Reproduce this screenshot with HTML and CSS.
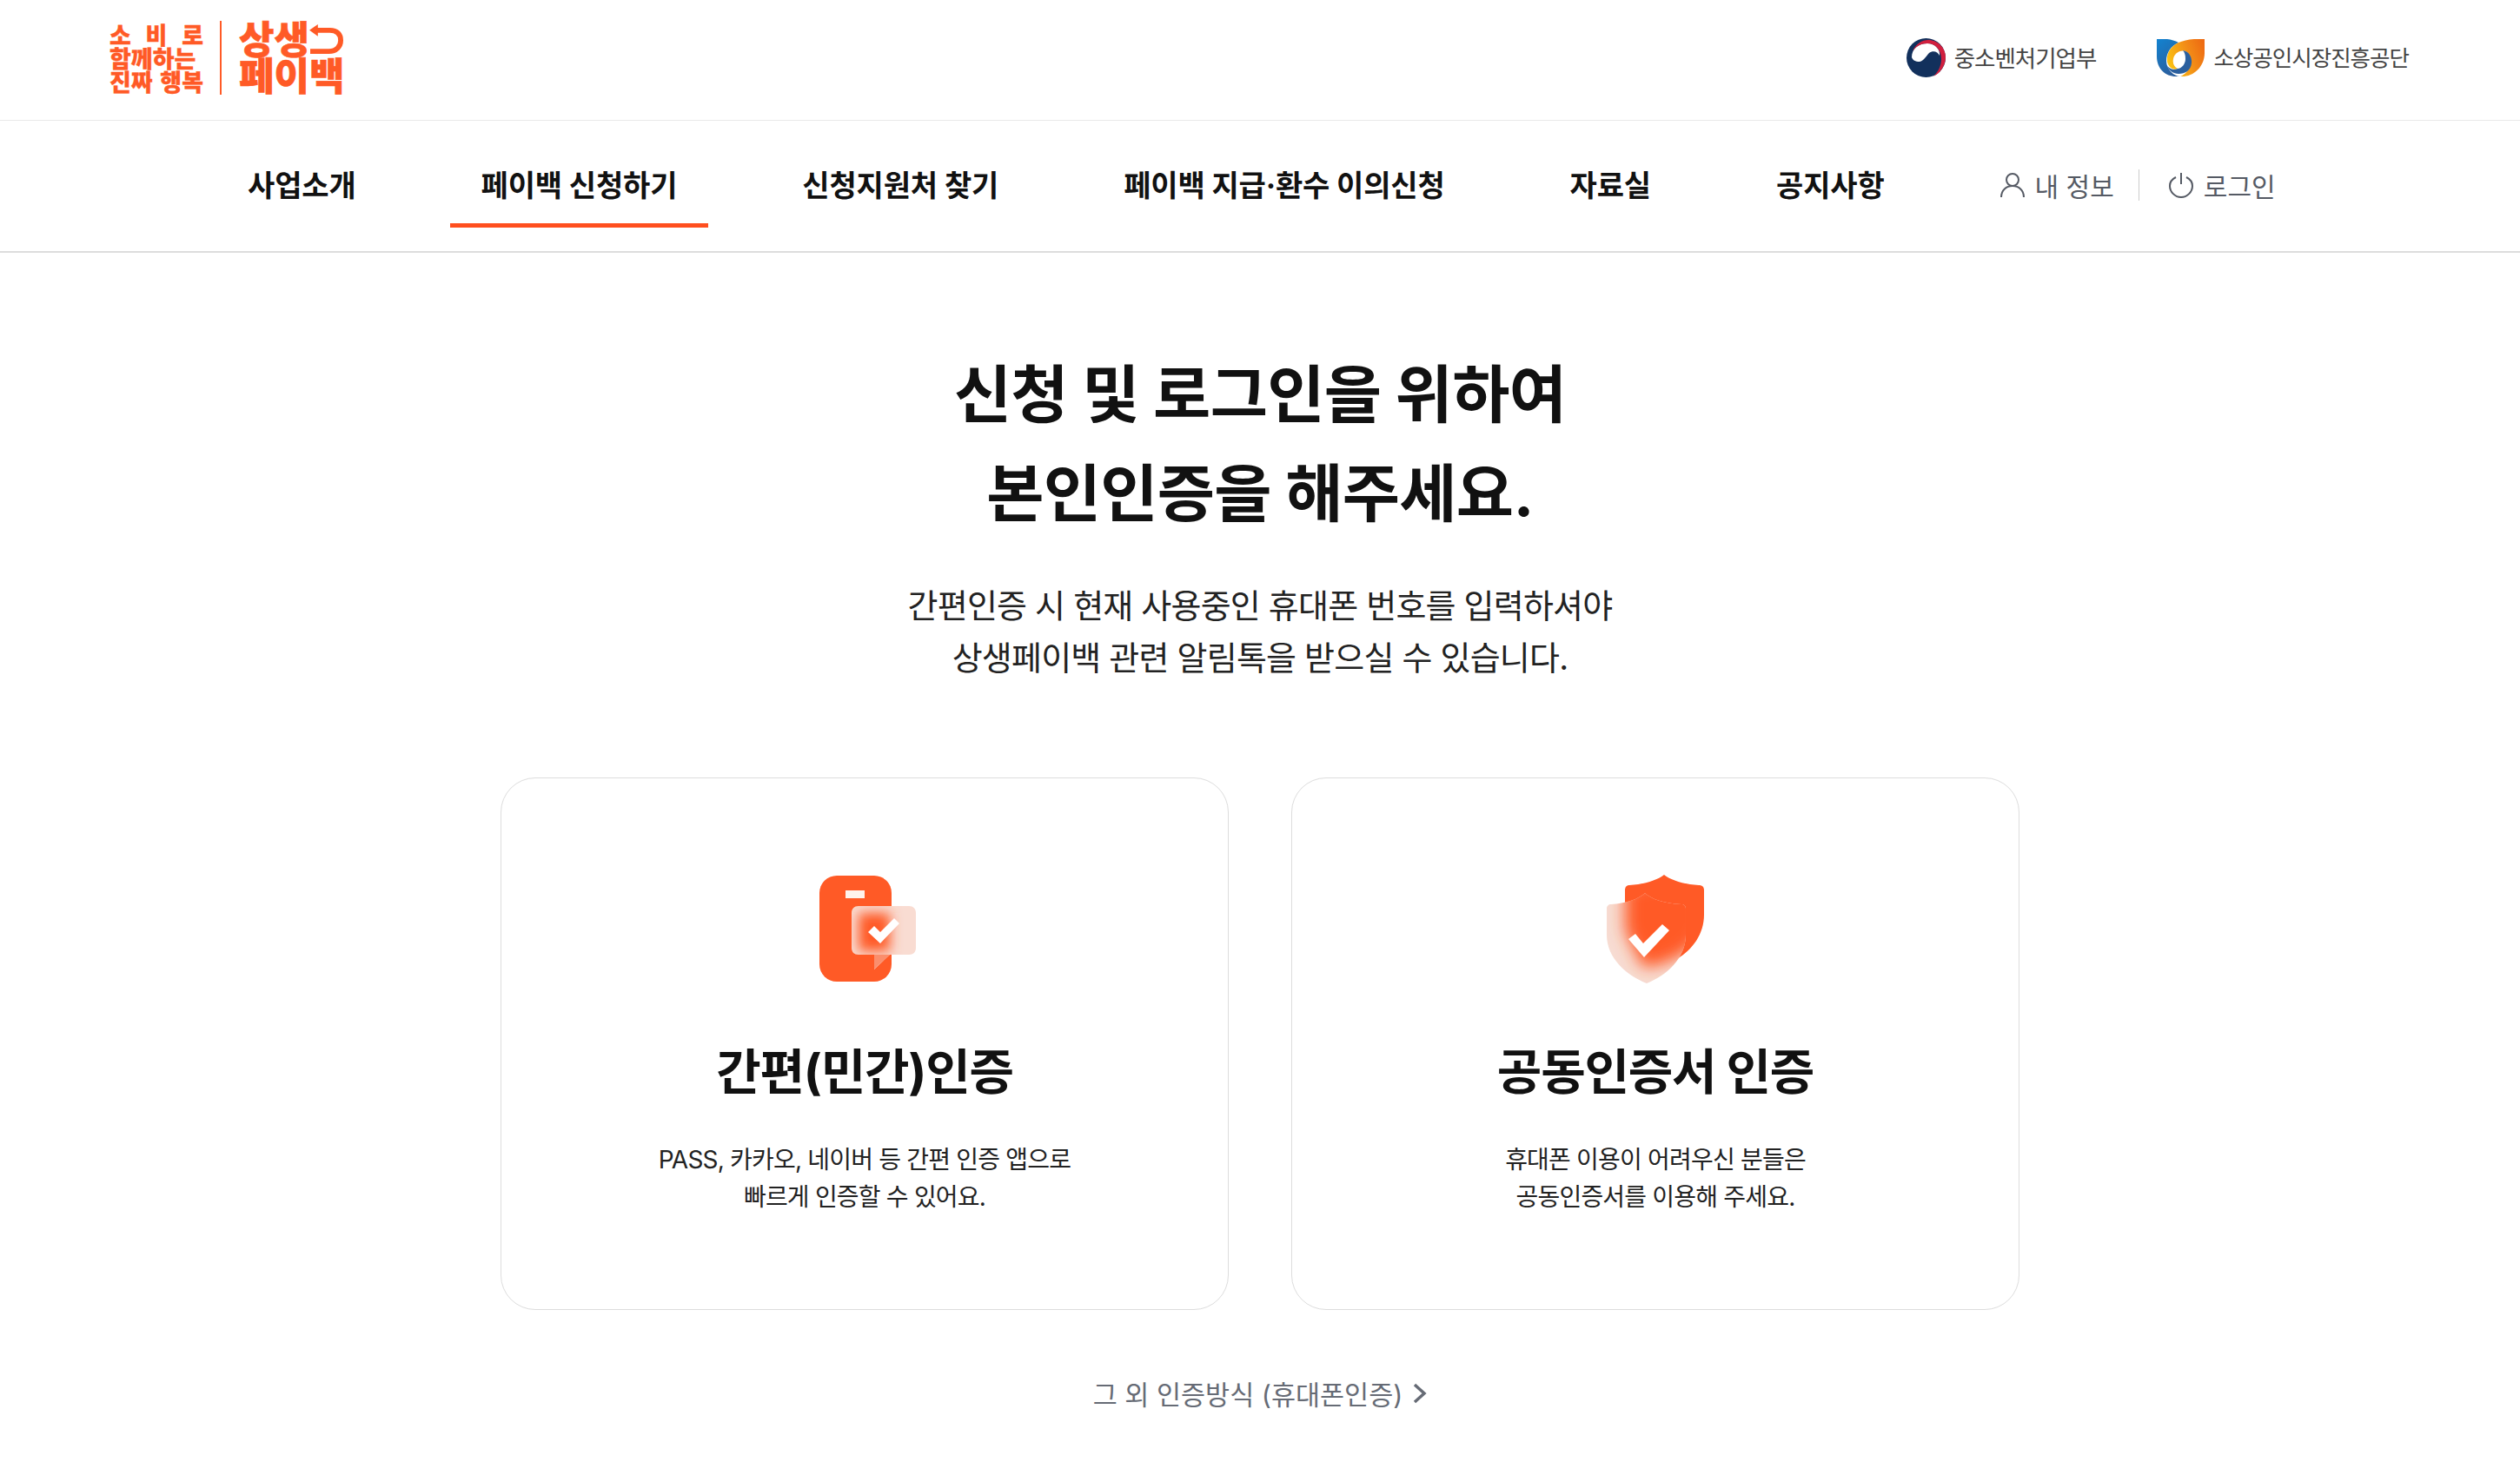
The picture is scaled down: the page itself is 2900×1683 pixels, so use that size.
FILE: index.html
```html
<!DOCTYPE html>
<html lang="ko">

<head>
  <meta charset="UTF-8">
  <meta name="viewport" content="width=device-width, initial-scale=1.0">
  <title>상생페이백</title>

  <link rel="stylesheet" href="styles.css">
</head>

<body>
  <header class="top-bar">
    <a class="logo">
      <div class="logo-slogan">
        <p>소 비 로</p>
        <p>함께하는</p>
        <p>진짜 행복</p>
      </div>
      <div class="logo-name">
        <p class="logo-name-top">상생
          <svg class="logo-arrow" viewBox="0 0 42 38">
            <path d="M6 7H24C33 7 37 12 37 19C37 26 32 32 23 32H1" fill="none" stroke="#ff5a26" stroke-width="6" />
            <path d="M0 7L10 0V14Z" fill="#ff5a26" />
          </svg>
        </p>
        <p>페이백</p>
      </div>
    </a>
    <div class="org-wrap">
      <div class="org org-first">
        <svg class="org-mark" viewBox="0 0 45 45">
          <circle cx="22.500" cy="22.500" r="22.500" fill="#12305c" />
          <path d="M6 22C6 12 14 6 24 6C33 6 39 13 38 20C36 15 30 14 26 17C23 20 20 26 15 27C10 27 7 25 6 22Z" fill="#fff" />
          <path d="M7 15C11 6 18 2 25 2C36 2 45 11 45 22C45 31 39 40 31 44C37 38 40 31 40 24C40 13 33 6 24 6C17 6 11 9 7 15Z" fill="#d11f3e" />
        </svg>
        <span>중소벤처기업부</span>
      </div>
      <div class="org org-second">
        <svg class="org-mark org-mark-wide" viewBox="8 10 55 44">
          <defs>
            <linearGradient id="kosmeBlue" x1="0" y1="0" x2="0.500" y2="1">
              <stop offset="0" stop-color="#1283d1" />
              <stop offset="1" stop-color="#2b5f9e" />
            </linearGradient>
            <linearGradient id="kosmeOrange" x1="0" y1="0.600" x2="1" y2="0.200">
              <stop offset="0" stop-color="#fbc312" />
              <stop offset="0.600" stop-color="#f28a17" />
              <stop offset="1" stop-color="#ee6b12" />
            </linearGradient>
          </defs>
          <path d="M8 10C16 9 26 10 33 14C24 18 19 26 19 35C19 45 28 53 35 53H30C18 53 8 44 8 30Z" fill="url(#kosmeBlue)" />
          <path d="M63 10C52 9 40 11 33 14C23 19 19 27 20 36C22 44 28 46 32 44C28 42 26 38 27 33C28 27 34 22 41 24C46 27 49 33 47 40C44 48 38 52 35 53C50 54 63 42 63 26Z" fill="url(#kosmeOrange)" />
          <path d="M38 23C45 24 49 31 48 38C47 46 41 50 33 50C27 50 22 46 20 41C24 45 28 46 32 44C37 44 41 38 41 33C41 28 40 25 38 23Z" fill="#2b5f9e" />
        </svg>
        <span>소상공인시장진흥공단</span>
      </div>
    </div>
  </header>

  <nav class="gnb">
    <a class="gnb-item">사업소개</a>
    <a class="gnb-item active">페이백 신청하기</a>
    <a class="gnb-item">신청지원처 찾기</a>
    <a class="gnb-item">페이백 지급·환수 이의신청</a>
    <a class="gnb-item">자료실</a>
    <a class="gnb-item">공지사항</a>
    <div class="user-menu">
      <a class="user-link">
        <svg class="user-icon" viewBox="0 0 28 30">
          <circle cx="14" cy="9" r="7" fill="none" stroke="#555a64" stroke-width="2" />
          <path d="M1 29C1 21 7 16 14 16C21 16 27 21 27 29" fill="none" stroke="#555a64" stroke-width="2" />
        </svg>
        내 정보
      </a>
      <i class="user-sep"></i>
      <a class="user-link">
        <svg class="user-icon" viewBox="0 0 28 30">
          <path d="M8 6C4 8 1 12 1 16C1 23 7 29 14 29C21 29 27 23 27 16C27 12 24 8 20 6" fill="none" stroke="#555a64" stroke-width="2" />
          <path d="M14 1V14" fill="none" stroke="#555a64" stroke-width="2" />
        </svg>
        로그인
      </a>
    </div>
  </nav>

  <main class="content">
    <h1 class="title">신청 및 로그인을 위하여<br>본인인증을 해주세요.</h1>
    <p class="sub">간편인증 시 현재 사용중인 휴대폰 번호를 입력하셔야<br>상생페이백 관련 알림톡을 받으실 수 있습니다.</p>

    <div class="card-wrap">
      <a class="card">
        <svg class="card-icon" viewBox="0 0 150 150">
          <defs>
            <clipPath id="bubbleClip">
              <path d="M68 52H126C131 52 134 55 134 60V100C134 105 131 108 126 108H104L86 125V108H68C63 108 60 105 60 100V60C60 55 63 52 68 52Z" />
            </clipPath>
            <filter id="blurA" x="-60%" y="-60%" width="220%" height="220%">
              <feGaussianBlur stdDeviation="7" />
            </filter>
          </defs>
          <rect x="23" y="17" width="83" height="122" rx="20" fill="#ff5a26" />
          <rect x="53" y="34" width="22" height="9" fill="#fff3ec" />
          <path d="M68 52H126C131 52 134 55 134 60V100C134 105 131 108 126 108H104L86 125V108H68C63 108 60 105 60 100V60C60 55 63 52 68 52Z" fill="#f9dcd2" />
          <g clip-path="url(#bubbleClip)">
            <rect x="68" y="60" width="36" height="44" fill="#ff5a26" filter="url(#blurA)" />
            <path d="M86 108H104L86 125Z" fill="#fb8e6c" />
          </g>
          <polygon points="79,82 86,75 93,82 109,66 115,72 93,95" fill="#fff" />
        </svg>
        <h2 class="card-title">간편(민간)인증</h2>
        <p class="card-desc">PASS, 카카오, 네이버 등 간편 인증 앱으로<br>빠르게 인증할 수 있어요.</p>
      </a>
      <a class="card">
        <svg class="card-icon" viewBox="0 0 150 150">
          <defs>
            <clipPath id="shieldClip">
              <path d="M63 37C70 44 85 49 105 50C108 50 110 52 110 55V85C110 112 88 132 65 141C42 132 19 112 19 85V55C19 52 21 50 24 50C41 49 56 44 63 37Z" />
            </clipPath>
            <filter id="blurB" x="-30%" y="-30%" width="160%" height="160%">
              <feGaussianBlur stdDeviation="9" />
            </filter>
          </defs>
          <path d="M85 16C92 22 108 27 125 28C129 28 131 30 131 34V62C131 84 118 102 100 113H60L40 80V34C40 30 42 28 45 28C62 27 78 22 85 16Z" fill="#ff5a26" />
          <path d="M63 37C70 44 85 49 105 50C108 50 110 52 110 55V85C110 112 88 132 65 141C42 132 19 112 19 85V55C19 52 21 50 24 50C41 49 56 44 63 37Z" fill="#f7dcd2" />
          <g clip-path="url(#shieldClip)">
            <path d="M85 16C92 22 108 27 125 28C129 28 131 30 131 34V70C131 90 112 112 70 122H60L40 80V34C40 30 42 28 45 28C62 27 78 22 85 16Z" fill="#ff5a26" filter="url(#blurB)" />
          </g>
          <polygon points="44,90 52,84 61,95 83,73 91,80 62,111" fill="#fff" />
        </svg>
        <h2 class="card-title">공동인증서 인증</h2>
        <p class="card-desc">휴대폰 이용이 어려우신 분들은<br>공동인증서를 이용해 주세요.</p>
      </a>
    </div>

    <a class="etc-link">
      그 외 인증방식 (휴대폰인증)
      <svg class="etc-arrow" viewBox="0 0 16 26">
        <path d="M2 3L13 13L2 23" fill="none" stroke="#666b75" stroke-width="3.500" />
      </svg>
    </a>
  </main>
</body>

</html>
```

FILE: styles.css
```css
* {
  margin: 0;
  padding: 0;
  box-sizing: border-box;
}

body {
  width: 100%;
  min-height: 100vh;
  background: #fff;
  color: #111;
  font-family: "Inter", "Noto Sans CJK KR", sans-serif;
}

.top-bar {
  height: 139px;
  padding: 0 128px 5px 126px;
  display: flex;
  justify-content: space-between;
  align-items: center;
  border-bottom: 1px solid #e9e9e9;
}

.logo {
  display: flex;
  align-items: stretch;
  color: #ff5a26;
  font-weight: 900;
}

.logo-slogan {
  width: 108px;
  padding-top: 4px;
  font-size: 27px;
  line-height: 27px;
  white-space: nowrap;
  -webkit-text-stroke: 0.300px #ff5a26;
}

.logo-slogan p {
  text-align: justify;
  text-align-last: justify;
}

.logo-name {
  margin-left: 19px;
  padding: 1px 0 0 20px;
  border-left: 2px solid #ff5a26;
  font-size: 44px;
  line-height: 42px;
  -webkit-text-stroke: 0.600px #ff5a26;
}

.logo-name-top {
  display: flex;
  align-items: center;
  white-space: nowrap;
}

.logo-arrow {
  width: 41px;
  height: 37px;
}

.org-wrap {
  display: flex;
  align-items: center;
  gap: 70px;
}

.org {
  display: flex;
  align-items: center;
  gap: 10px;
  font-size: 25.500px;
  color: #444;
  letter-spacing: -1px;
}

.org-first {
  font-size: 26.500px;
}

.org-first span {
  margin-bottom: 2px;
}

.org-second span {
  margin-bottom: 4px;
}

.org-mark {
  width: 45px;
  height: 45px;
}

.org-mark-wide {
  width: 55px;
  height: 44px;
}

.gnb {
  height: 152px;
  padding: 0 0 0 249px;
  display: flex;
  align-items: stretch;
  border-bottom: 2px solid #ddd;
}

.gnb-item {
  padding: 26px 36px 0;
  margin-right: 72px;
  height: 123px;
  display: flex;
  align-items: center;
  justify-content: center;
  border-bottom: 5px solid transparent;
  font-size: 34px;
  font-weight: 700;
  letter-spacing: -0.150px;
  color: #111;
  white-space: nowrap;
}

.gnb-item.active {
  border-bottom-color: #ff4f1f;
}

.user-menu {
  height: 123px;
  padding-top: 24px;
  margin-left: 25px;
  display: flex;
  align-items: center;
  font-size: 30px;
  color: #555a64;
  white-space: nowrap;
}

.user-link {
  display: flex;
  align-items: center;
  gap: 12px;
}

.user-icon {
  width: 28px;
  height: 30px;
}

.user-sep {
  width: 1px;
  height: 36px;
  margin: 0 34px 0 28px;
  background: #ccc;
}

.content {
  padding-top: 106px;
  display: flex;
  flex-direction: column;
  align-items: center;
  text-align: center;
}

.title {
  font-size: 72px;
  line-height: 114px;
  font-weight: 700;
  letter-spacing: -0.700px;
  color: #111;
}

.sub {
  margin-top: 42px;
  font-size: 38px;
  line-height: 60px;
  letter-spacing: -0.800px;
  color: #222;
}

.card-wrap {
  margin-top: 108px;
  display: flex;
  gap: 72px;
}

.card {
  width: 838px;
  height: 613px;
  padding-top: 106px;
  display: flex;
  flex-direction: column;
  align-items: center;
  border: 1.500px solid #ddd;
  border-radius: 40px;
}

.card-icon {
  width: 150px;
  height: 150px;
  margin-top: -11px;
}

.card-title {
  margin-top: 53px;
  font-size: 56px;
  line-height: 80px;
  font-weight: 700;
  letter-spacing: -1.200px;
  color: #111;
}

.card-desc {
  margin-top: 40px;
  font-size: 28px;
  line-height: 43px;
  letter-spacing: -0.800px;
  color: #222;
}

.etc-link {
  margin-top: 74px;
  display: flex;
  align-items: center;
  gap: 12px;
  font-size: 30.500px;
  color: #666b75;
}

.etc-arrow {
  width: 16px;
  height: 26px;
}
```
